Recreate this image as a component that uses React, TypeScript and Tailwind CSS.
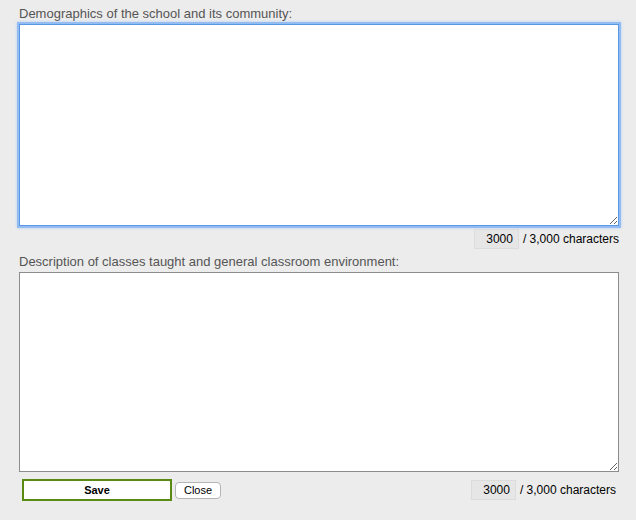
import React, { useState } from "react";

const MAX = 3000;

function Counter({ left, className = "" }: { left: number; className?: string }) {
  return (
    <div className={`flex items-center justify-end gap-[4px] text-[12px] text-black ${className}`}>
      <span className="w-[45px] h-[20px] bg-[#e6e6e6] border border-[#dcdcdc] text-right pr-[5px] leading-[18px]">{left}</span>
      <span>/ 3,000 characters</span>
    </div>
  );
}

export default function App() {
  const [demo, setDemo] = useState("");
  const [desc, setDesc] = useState("");

  return (
    <div className="w-[636px] h-[520px] bg-[#ececec] px-[19px] pt-[6px] font-['Liberation_Sans',Arial,sans-serif] text-[13px] text-[#555]">
      <label className="block leading-[16px]">Demographics of the school and its community:</label>
      <textarea
        value={demo}
        onChange={(e) => setDemo(e.target.value)}
        maxLength={MAX}
        className="block mt-[2px] w-[600px] h-[202px] bg-white border border-[#5a98e6] shadow-[0_0_0_2px_#93bdf2,0_0_3px_2px_#b7d3f5] outline-none"
      />
      <Counter left={MAX - demo.length} className="mt-[3px] w-[600px]" />
      <label className="block mt-[5px] leading-[16px]">Description of classes taught and general classroom environment:</label>
      <textarea
        value={desc}
        onChange={(e) => setDesc(e.target.value)}
        maxLength={MAX}
        className="block mt-[2px] w-[600px] h-[200px] bg-white border border-[#8c8c8c] outline-none"
      />
      <div className="flex items-center mt-[7px] w-[597px]">
        <button className="ml-[3px] w-[150px] h-[22px] bg-white border-2 border-[#5b8a14] text-[11px] font-bold text-black">Save</button>
        <button className="ml-[3px] w-[46px] h-[17px] bg-white border border-[#b5b5b5] rounded-[4px] text-[11px] text-black leading-none">Close</button>
        <Counter left={MAX - desc.length} className="ml-auto" />
      </div>
    </div>
  );
}
